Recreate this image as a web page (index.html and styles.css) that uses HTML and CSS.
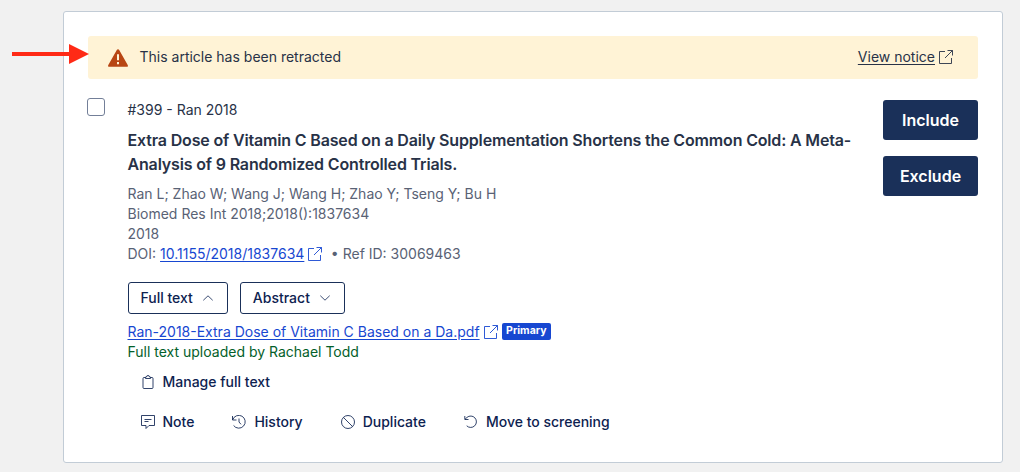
FILE: index.html
```html
<!DOCTYPE html>
<html lang="en">
<head>
    <meta charset="UTF-8">
    <meta name="viewport" content="width=device-width, initial-scale=1.0">
    <title>Study screening</title>
    <link rel="stylesheet" href="styles.css">
</head>
<body>
    <!-- shared icon shapes -->
    <svg class="sprite">
        <symbol id="external" viewBox="0 0 14 14">
            <path d="M6 1.5H.5v12h12V8M6 8L13.5.5M8.500.5h5v5"></path>
        </symbol>
    </svg>

    <div class="card">
        <div class="banner">
            <svg class="warning" viewBox="0 0 20 18">
                <path d="M8.8.9a1.4 1.4 0 0 1 2.4 0l8.5 15.2a1.2 1.2 0 0 1-1.1 1.7H1.4A1.2 1.2 0 0 1 .3 16.1z" fill="#b84614"></path>
                <path d="M10 5.3v5.9M10 13.1v2.1" stroke="#fff3d6" stroke-width="2"></path>
            </svg>
            <span class="banner-text">This article has been retracted</span>
            <a href="#" class="notice">View notice</a>
            <svg class="icon external"><use href="#external"></use></svg>
        </div>

        <div class="study">
            <input type="checkbox" class="select" aria-label="Select study">

            <div class="details">
                <p class="study-id">#399 - Ran 2018</p>
                <h2 class="title">Extra Dose of Vitamin C Based on a Daily Supplementation Shortens the Common Cold: A Meta-Analysis of 9 Randomized Controlled Trials.</h2>
                <div class="meta">
                    <p>Ran L; Zhao W; Wang J; Wang H; Zhao Y; Tseng Y; Bu H</p>
                    <p>Biomed Res Int 2018;2018():1837634</p>
                    <p>2018</p>
                    <p class="line">DOI:&nbsp;<a href="#" class="link">10.1155/2018/1837634</a><svg class="icon external blue"><use href="#external"></use></svg><span class="ref">• Ref ID: 30069463</span></p>
                </div>

                <div class="toggles">
                    <button class="toggle">Full text
                        <svg class="icon chevron" viewBox="0 0 10 6"><path d="M.3 5.3L5 .8l4.7 4.5"></path></svg>
                    </button>
                    <button class="toggle">Abstract
                        <svg class="icon chevron" viewBox="0 0 10 6"><path d="M.3.7L5 5.2 9.700.7"></path></svg>
                    </button>
                </div>

                <p class="line file"><a href="#" class="link">Ran-2018-Extra Dose of Vitamin C Based on a Da.pdf</a><svg class="icon external blue"><use href="#external"></use></svg><span class="badge">Primary</span></p>
                <p class="uploaded">Full text uploaded by Rachael Todd</p>

                <div class="actions">
                    <button class="action">
                        <svg class="icon" viewBox="0 0 14 14"><path d="M4 2.500H3a1 1 0 0 0-1 1v9a1 1 0 0 0 1 1h8a1 1 0 0 0 1-1v-9a1 1 0 0 0-1-1h-1M4.500 3.500V2h1a1.500 1.500 0 0 1 3 0h1v1.500z"></path></svg>
                        Manage full text
                    </button>
                </div>
                <div class="actions">
                    <button class="action">
                        <svg class="icon" viewBox="0 0 14 14"><path d="M.5.5h13v10H8l-3 3v-3H.5zM3.500 4.500h7M3.500 6.500h4"></path></svg>
                        Note
                    </button>
                    <button class="action">
                        <svg class="icon" viewBox="0 0 14 14"><path d="M.5 1v4h4M.7 4.8A6.400 6.400 0 1 1 1.600 10.500M7 3.500V7l2 2.300"></path></svg>
                        History
                    </button>
                    <button class="action">
                        <svg class="icon" viewBox="0 0 14 14"><circle cx="7" cy="7" r="6.500"></circle><path d="M2.400 2.400l9.200 9.200"></path></svg>
                        Duplicate
                    </button>
                    <button class="action">
                        <svg class="icon" viewBox="0 0 14 14"><path d="M.8 1v3.500h3.700M1 4.300l2-1.900A5.700 5.700 0 1 1 2.700 10.800"></path></svg>
                        Move to screening
                    </button>
                </div>
            </div>

            <div class="votes">
                <button class="vote">Include</button>
                <button class="vote">Exclude</button>
            </div>
        </div>
    </div>

    <!-- callout arrow over the banner edge -->
    <svg class="arrow" viewBox="0 0 77 20">
        <path d="M0 10h60" stroke="#ff2a16" stroke-width="4"></path>
        <path d="M57 0l20 10-20 10z" fill="#ff2a16"></path>
    </svg>
</body>
</html>
```
FILE: styles.css
```css
* {
    margin: 0;
    padding: 0;
    box-sizing: border-box;
}

body {
    height: 472px;
    padding: 11px 17px 0 63px;
    background: #f1f1f1;
    font-family: Inter, "Liberation Sans", sans-serif;
    font-size: 14px;
    line-height: 20px;
    color: #283247;
    overflow: hidden;
}

button {
    font-family: inherit;
    cursor: pointer;
}

.sprite {
    display: none;
}

.card {
    height: 452px;
    padding: 24px;
    background: white;
    border: 1px solid #c2ccd6;
    border-radius: 3px;
}

.banner {
    display: flex;
    align-items: center;
    height: 43px;
    padding: 0 25px 1px 20px;
    background: #fff3d6;
    border-radius: 3px;
}

.warning {
    width: 20px;
    height: 18px;
    margin: 2px 11.5px 0 0;
}

.banner-text {
    flex: 1;
}

.notice {
    color: inherit;
    text-underline-offset: 2px;
}

.icon {
    flex: none;
    width: 14px;
    height: 14px;
    fill: none;
    stroke: currentColor;
    stroke-width: 1;
}

.external {
    margin-left: 4px;
    stroke-width: 0.9;
}

.study {
    display: flex;
    align-items: flex-start;
    padding-top: 21px;
}

.select {
    appearance: none;
    width: 18px;
    height: 18px;
    margin: -2px 22.5px 0 -1px;
    border: 1px solid #737f98;
    border-radius: 3px;
    background: white;
}

.details {
    width: 732px;
}

.title {
    margin: 8px 0;
    font-size: 16px;
    font-weight: 600;
    line-height: 24px;
    letter-spacing: -0.01em;
}

.meta {
    color: #596275;
}

.line {
    display: flex;
    align-items: center;
}

.link {
    color: #1747d1;
    text-underline-offset: 2px;
}

.blue {
    color: #1747d1;
}

.ref {
    margin-left: 8.5px;
}

.toggles {
    display: flex;
    gap: 12px;
    margin: 18px 0 8px;
}

.toggle {
    display: flex;
    align-items: center;
    height: 32px;
    padding: 0 14px 1px 12px;
    border: 1px solid #1a3059;
    border-radius: 3px;
    background: white;
    color: #0d2250;
    font-size: 14px;
    font-weight: 500;
}

.chevron {
    width: 10px;
    height: 6px;
    margin-left: 10px;
    stroke-width: 0.8;
}

.badge {
    height: 17px;
    margin-left: 4px;
    margin-top: -1px;
    padding: 0 4.5px;
    border-radius: 2px;
    background: #1747d1;
    color: white;
    font-size: 10.5px;
    font-weight: 700;
    line-height: 16px;
}

.uploaded {
    color: #04602a;
}

.actions {
    display: flex;
    gap: 12px;
    margin-top: 4px;
}

.actions + .actions {
    margin-top: 8px;
}

.action {
    display: flex;
    align-items: center;
    gap: 8px;
    height: 32px;
    padding: 0 13px 1px;
    border: none;
    background: none;
    color: #0d2250;
    font-size: 14px;
    font-weight: 500;
}

.action .icon {
    stroke-width: 0.85;
}

.votes {
    display: flex;
    flex-direction: column;
    gap: 16px;
    width: 95px;
    margin-left: auto;
}

.vote {
    height: 40px;
    border: none;
    border-radius: 3px;
    background: #1a3059;
    color: white;
    font-size: 16px;
    font-weight: 600;
}

.arrow {
    position: absolute;
    top: 44px;
    left: 12px;
    width: 77px;
    height: 20px;
}
```
